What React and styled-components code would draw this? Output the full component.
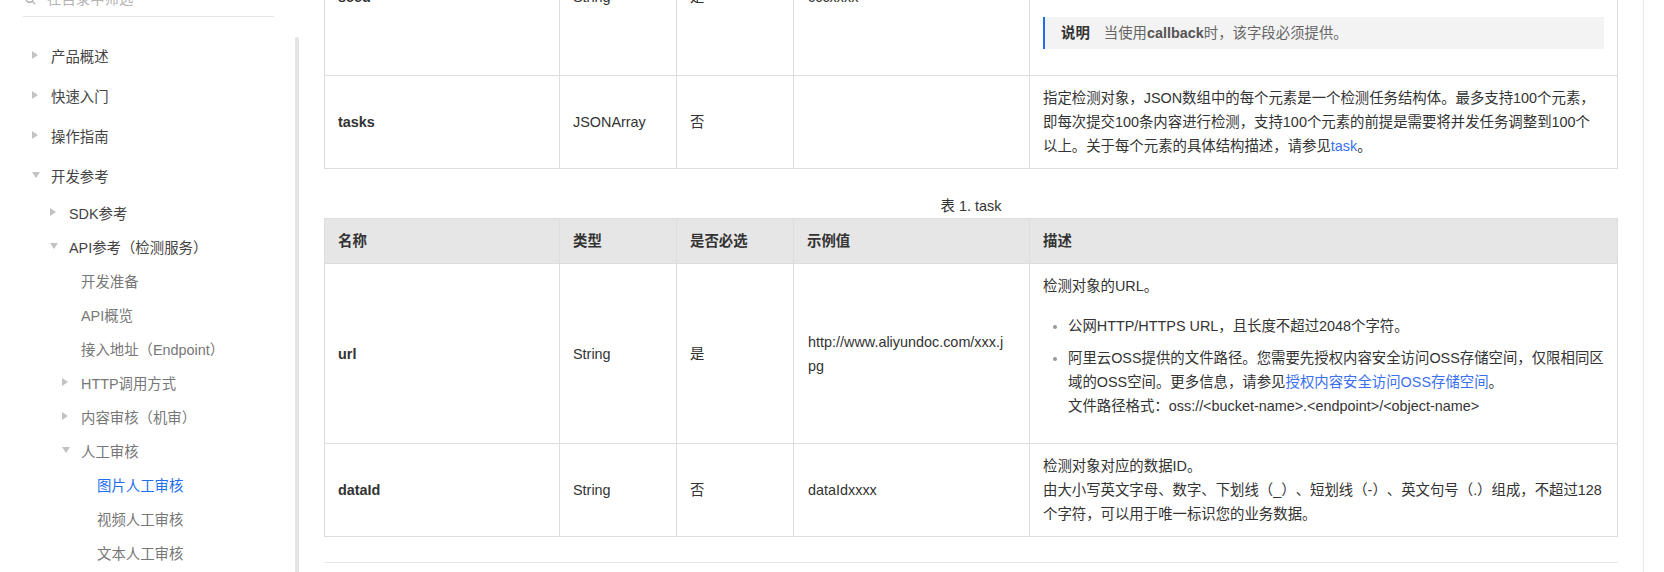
import React from 'react';
import styled, { createGlobalStyle } from 'styled-components';

const GlobalStyle = createGlobalStyle`
  html, body {
    margin: 0;
    padding: 0;
    background: #fff;
  }
  body {
    font-family: "Liberation Sans", "Noto Sans CJK SC", sans-serif;
    font-size: 14.4px;
    color: #333;
    text-spacing-trim: space-all;
  }
`;

const Page = styled.div`
  display: flex;
  width: 1664px;
  height: 572px;
  overflow: hidden;
`;

/* ---------- sidebar ---------- */

const Sidebar = styled.aside`
  width: 300px;
  flex: none;
  display: flex;
  overflow: hidden;
`;

const SideInner = styled.div`
  flex: 1;
  margin-top: -13px;
`;

const Search = styled.div`
  display: flex;
  align-items: center;
  gap: 11px;
  margin: 0 21px 0 23px;
  padding: 0 0 5px 2px;
  border-bottom: 1px solid #e5e5e5;
  line-height: 24px;
  color: #b3b3b3;
`;

const NavList = styled.ul`
  list-style: none;
  margin: 18px 0 0;
  padding: 0;
`;

const NavItem = styled.li`
  display: flex;
  align-items: center;
  height: ${(p) => (p.$level === 1 ? 40 : 34)}px;
  padding-left: ${(p) => ({ 1: 32, 2: 50, 3: 62, 4: 78 }[p.$level])}px;
  color: ${(p) => (p.$active ? '#1f6ef0' : p.$level <= 2 ? '#444' : '#777')};
  white-space: nowrap;
`;

const CaretBox = styled.span`
  width: 19px;
  flex: none;
  display: flex;
  align-items: center;
`;

const ScrollTrack = styled.div`
  width: 4px;
  flex: none;
  margin-right: 1px;
  padding-top: 37px;
  display: flex;
`;

const ScrollThumb = styled.div`
  flex: 1;
  background: #e4e4e4;
  border-radius: 2px 2px 0 0;
`;

/* ---------- main ---------- */

const Main = styled.main`
  flex: 1;
  min-width: 0;
  overflow: hidden;
  padding: 0 25px 0 24px;
`;

const MainInner = styled.div`
  margin-top: -82px;
`;

const RightRail = styled.div`
  width: 20px;
  flex: none;
  border-left: 1px solid #e8e8e8;
`;

const Caption = styled.div`
  margin-top: 25px;
  text-align: center;
  line-height: 24px;
  color: #333;
`;

const Table = styled.table`
  width: 100%;
  border-collapse: collapse;
  table-layout: fixed;
  line-height: 24px;
`;

const Th = styled.th`
  background: #e6e6e6;
  border: 1px solid #ddd;
  padding: 10px 13px;
  text-align: left;
  font-weight: bold;
  color: #333;
`;

const Td = styled.td`
  border: 1px solid #ddd;
  padding: 10px 13px;
  vertical-align: middle;
  color: #333;
  font-weight: ${(p) => (p.$bold ? 'bold' : 'normal')};
`;

const Example = styled.span`
  display: inline-block;
  max-width: 200px;
  padding-left: 1px;
  word-break: break-all;
`;

const Para = styled.p`
  margin: 0 0 ${(p) => p.$gap || 0}px;
`;

const Note = styled.div`
  margin: 16px 0;
  padding: 4px 16px;
  background: #f3f3f3;
  border-left: 2px solid #1f6ef0;
  line-height: 24px;
  color: #666;
`;

const NoteTitle = styled.strong`
  color: #333;
  margin-right: 14px;
`;

const Strong = styled.b`
  color: #555;
`;

const Link = styled.a`
  color: #3a6ff0;
  text-decoration: none;
`;

const Bullets = styled.ul`
  margin: 0 0 15px;
  padding-left: 25px;
`;

const Bullet = styled.li`
  margin-top: 8px;
  &:first-child {
    margin-top: 0;
  }
  &::marker {
    color: #999;
    font-size: 13px;
  }
`;

const Divider = styled.div`
  margin-top: 25px;
  border-top: 1px solid #e8e8e8;
`;

const SearchIcon = () => (
  <svg width="11" height="11" viewBox="0 0 12 12" fill="none" stroke="#aaa" strokeWidth="1.4">
    <circle cx="5" cy="5" r="4" />
    <path d="M8 8l3 3" />
  </svg>
);

const Caret = ({ dir }) =>
  dir === 'down' ? (
    <svg width="8" height="6" viewBox="0 0 8 6">
      <polygon points="0,0 8,0 4,6" fill="#c2c2c2" />
    </svg>
  ) : (
    <svg width="6" height="8" viewBox="0 0 6 8">
      <polygon points="0,0 6,4 0,8" fill="#c2c2c2" />
    </svg>
  );

const nav = [
  { label: '产品概述', level: 1, caret: 'right' },
  { label: '快速入门', level: 1, caret: 'right' },
  { label: '操作指南', level: 1, caret: 'right' },
  { label: '开发参考', level: 1, caret: 'down' },
  { label: 'SDK参考', level: 2, caret: 'right' },
  { label: 'API参考（检测服务）', level: 2, caret: 'down' },
  { label: '开发准备', level: 3 },
  { label: 'API概览', level: 3 },
  { label: '接入地址（Endpoint）', level: 3 },
  { label: 'HTTP调用方式', level: 3, caret: 'right' },
  { label: '内容审核（机审）', level: 3, caret: 'right' },
  { label: '人工审核', level: 3, caret: 'down' },
  { label: '图片人工审核', level: 4, active: true },
  { label: '视频人工审核', level: 4 },
  { label: '文本人工审核', level: 4 },
];

const Cols = () => (
  <colgroup>
    <col style={{ width: 235 }} />
    <col style={{ width: 117 }} />
    <col style={{ width: 117 }} />
    <col style={{ width: 236 }} />
    <col />
  </colgroup>
);

const App = () => (
  <>
    <GlobalStyle />
    <Page>
      <Sidebar>
        <SideInner>
          <Search>
            <SearchIcon />
            <span>在目录中筛选</span>
          </Search>
          <NavList>
            {nav.map((item) => (
              <NavItem key={item.label} $level={item.level} $active={item.active}>
                <CaretBox>{item.caret && <Caret dir={item.caret} />}</CaretBox>
                {item.label}
              </NavItem>
            ))}
          </NavList>
        </SideInner>
        <ScrollTrack>
          <ScrollThumb />
        </ScrollTrack>
      </Sidebar>

      <Main>
        <MainInner>
          <Table>
            <Cols />
            <tbody>
              <tr>
                <Td $bold>seed</Td>
                <Td>String</Td>
                <Td>是</Td>
                <Td>
                  <Example>cccxxxx</Example>
                </Td>
                <Td>
                  <Para>
                    随机字符串，该值用于回调通知请求中的签名。由英文字母、数字、下划线（_）组成，不超过64个字符。由您自定义，用于在接收到内容安全的回调通知时校验请求由阿里云内容安全服务发起。
                  </Para>
                  <Note>
                    <NoteTitle>说明</NoteTitle>
                    当使用<Strong>callback</Strong>时，该字段必须提供。
                  </Note>
                </Td>
              </tr>
              <tr>
                <Td $bold>tasks</Td>
                <Td>JSONArray</Td>
                <Td>否</Td>
                <Td />
                <Td>
                  指定检测对象，JSON数组中的每个元素是一个检测任务结构体。最多支持100个元素，即每次提交100条内容进行检测，支持100个元素的前提是需要将并发任务调整到100个以上。关于每个元素的具体结构描述，请参见
                  <Link href="#task">task</Link>。
                </Td>
              </tr>
            </tbody>
          </Table>

          <Caption>表 1. task</Caption>
          <Table>
            <Cols />
            <thead>
              <tr>
                <Th>名称</Th>
                <Th>类型</Th>
                <Th>是否必选</Th>
                <Th>示例值</Th>
                <Th>描述</Th>
              </tr>
            </thead>
            <tbody>
              <tr>
                <Td $bold>url</Td>
                <Td>String</Td>
                <Td>是</Td>
                <Td>
                  <Example>http://www.aliyundoc.com/xxx.jpg</Example>
                </Td>
                <Td>
                  <Para $gap={16}>检测对象的URL。</Para>
                  <Bullets>
                    <Bullet>公网HTTP/HTTPS URL，且长度不超过2048个字符。</Bullet>
                    <Bullet>
                      阿里云OSS提供的文件路径。您需要先授权内容安全访问OSS存储空间，仅限相同区域的OSS空间。更多信息，请参见
                      <Link href="#oss">授权内容安全访问OSS存储空间</Link>。
                      <br />
                      文件路径格式：oss://&lt;bucket-name&gt;.&lt;endpoint&gt;/&lt;object-name&gt;
                    </Bullet>
                  </Bullets>
                </Td>
              </tr>
              <tr>
                <Td $bold>dataId</Td>
                <Td>String</Td>
                <Td>否</Td>
                <Td>
                  <Example>dataIdxxxx</Example>
                </Td>
                <Td>
                  检测对象对应的数据ID。
                  <br />
                  由大小写英文字母、数字、下划线（_）、短划线（-）、英文句号（.）组成，不超过128个字符，可以用于唯一标识您的业务数据。
                </Td>
              </tr>
            </tbody>
          </Table>
          <Divider />
        </MainInner>
      </Main>

      <RightRail />
    </Page>
  </>
);

export default App;
